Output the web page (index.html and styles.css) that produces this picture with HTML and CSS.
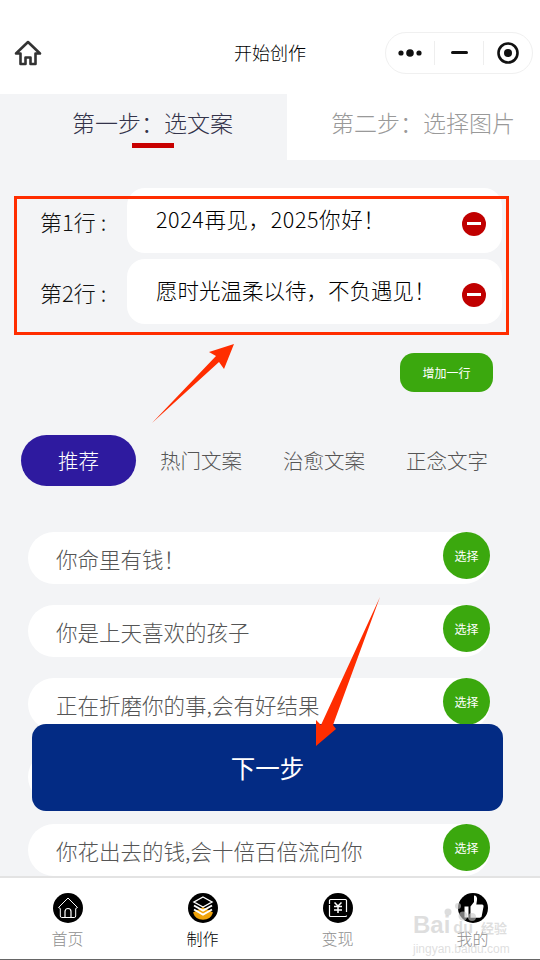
FILE: index.html
```html
<!DOCTYPE html>
<html lang="zh-CN">
<head>
    <meta charset="UTF-8">
    <meta name="viewport" content="width=device-width, initial-scale=1.0">
    <title>开始创作</title>
    <link rel="stylesheet" href="styles.css">
</head>
<body>
    <div class="page">
        <!-- Top Bar -->
        <header class="topbar">
            <svg class="home-icon" width="28" height="26" viewBox="0 0 28 26">
                <path d="M2 13.500 14 2l12 11.500h-4.500V24H16.500v-6.500h-5V24H6.500V13.500z" fill="none" stroke="#333" stroke-width="2.600" stroke-linejoin="round"/>
            </svg>
            <div class="topbar-title">开始创作</div>
            <div class="capsule">
                <div class="capsule-cell">
                    <svg width="24" height="10" viewBox="0 0 24 10"><circle cx="3" cy="5" r="2.600"/><circle cx="12" cy="5" r="3.800"/><circle cx="21" cy="5" r="2.600"/></svg>
                </div>
                <div class="capsule-cell">
                    <span class="capsule-dash"></span>
                </div>
                <div class="capsule-cell">
                    <svg width="22" height="22" viewBox="0 0 22 22"><circle cx="11" cy="11" r="9.500" fill="none" stroke="#111" stroke-width="2.600"/><circle cx="11" cy="11" r="4"/></svg>
                </div>
            </div>
        </header>

        <!-- Step Tabs -->
        <div class="steps">
            <div class="step step-active">
                <span>第一步：选文案</span>
                <i class="step-line"></i>
            </div>
            <div class="step">
                <span>第二步：选择图片</span>
            </div>
        </div>

        <main class="content">
            <!-- Input Rows -->
            <section class="lines">
                <div class="line">
                    <div class="line-label">第1行 :</div>
                    <div class="line-card line-card-first">
                        <span>2024再见，2025你好！</span>
                        <b class="minus"></b>
                    </div>
                </div>
                <div class="line">
                    <div class="line-label">第2行 :</div>
                    <div class="line-card">
                        <span>愿时光温柔以待，不负遇见！</span>
                        <b class="minus"></b>
                    </div>
                </div>
            </section>

            <div class="add-wrap">
                <div class="add-btn">增加一行</div>
            </div>

            <!-- Categories -->
            <nav class="cats">
                <div class="cat cat-active">推荐</div>
                <div class="cat">热门文案</div>
                <div class="cat">治愈文案</div>
                <div class="cat">正念文字</div>
            </nav>

            <!-- Copy List -->
            <ul class="copy-list">
                <li class="copy"><span>你命里有钱！</span><b class="pick">选择</b></li>
                <li class="copy"><span>你是上天喜欢的孩子</span><b class="pick">选择</b></li>
                <li class="copy"><span>正在折磨你的事,会有好结果</span><b class="pick">选择</b></li>
                <li class="copy"><span>努力的人,运气都不会差</span><b class="pick">选择</b></li>
                <li class="copy"><span>你花出去的钱,会十倍百倍流向你</span><b class="pick">选择</b></li>
            </ul>
        </main>

        <!-- Bottom Tabs -->
        <footer class="tabbar">
            <div class="tab">
                <svg width="30" height="30" viewBox="0 0 30 30">
                    <circle cx="15" cy="15" r="15" fill="#000"/>
                    <path d="M5.500 14.500 15 5l9.500 9.500-1.800 1v7.500a1.500 1.500 0 0 1-1.500 1.500H8.800a1.500 1.500 0 0 1-1.500-1.500v-7.500z" fill="none" stroke="#fff" stroke-width="1"/>
                    <path d="M12 24.500v-6a3 3 0 0 1 6 0v6" fill="none" stroke="#fff" stroke-width="1.200"/>
                </svg>
                <span>首页</span>
            </div>
            <div class="tab tab-active">
                <svg width="30" height="30" viewBox="0 0 30 30">
                    <circle cx="15" cy="15" r="15" fill="#000"/>
                    <path d="M5 19.500 15 14l10 5.500a10.500 10.500 0 0 1-20 0z" fill="#f0a30a"/>
                    <path d="M15 4 24 9l-9 5-9-5z" fill="none" stroke="#fff" stroke-width="1.400"/>
                    <path d="M6 12.500 15 17.500l9-5M6 16.500l9 5 9-5" fill="none" stroke="#fff" stroke-width="2"/>
                </svg>
                <span>制作</span>
            </div>
            <div class="tab">
                <svg width="30" height="30" viewBox="0 0 30 30">
                    <circle cx="15" cy="15" r="15" fill="#000"/>
                    <path d="M6.500 11V7.500a1 1 0 0 1 1-1h15a1 1 0 0 1 1 1V19M23.500 22.500a1 1 0 0 1-1 1h-15a1 1 0 0 1-1-1V12" fill="none" stroke="#fff" stroke-width="1.200"/>
                    <path d="M11.500 9.500 15 13l3.500-3.500M11 13.500h8M11 17h8M15 13v7" fill="none" stroke="#fff" stroke-width="1.500"/>
                </svg>
                <span>变现</span>
            </div>
            <div class="tab">
                <svg width="30" height="30" viewBox="0 0 30 30">
                    <circle cx="15" cy="15" r="15" fill="#000"/>
                    <path d="M12.500 13.500 16 9V2.500c2.300 0 3.500 1.800 3 4.500l-.7 4.500H24c1.300 0 1.800 1.200 1.500 2.300l-1.800 9.500c-.3 1-1 1.400-2 1.400h-9.200z" fill="#fff"/>
                    <rect x="6.500" y="13.500" width="4" height="11" fill="#fff"/>
                </svg>
                <span>我的</span>
            </div>
        </footer>

        <!-- Floating Next Button -->
        <div class="next-btn">下一步</div>

        <!-- Annotations drawn over the screenshot -->
        <div class="mark-box"></div>
        <svg class="marks" width="540" height="960" viewBox="0 0 540 960">
            <path d="M152 423 216 356 209 352 234 344 224 369 219 362z" fill="#ff2d00"/>
            <path d="M380 597 333 725 336 729 316 746 316 720 321 725z" fill="#ff2d00"/>
            <g fill="#c8c8c8" opacity="0.6">
                <circle cx="448" cy="912" r="3.500"/>
                <circle cx="458" cy="906" r="3"/>
                <circle cx="463" cy="916" r="4.500"/>
                <circle cx="472" cy="917" r="4"/>
            </g>
        </svg>

        <div class="watermark">
            <div class="wm-logo">Bai<em>du</em><span>经验</span></div>
            <div class="wm-url">jingyan.baidu.com</div>
        </div>
    </div>
</body>
</html>
```

FILE: styles.css
```css
* {
    margin: 0;
    padding: 0;
    box-sizing: border-box;
}

body {
    font-family: "Noto Sans CJK SC", "Liberation Sans", sans-serif;
    font-weight: 300;
    background-color: #f3f4f6;
    color: #111;
    overflow: hidden;
}

.page {
    position: relative;
    display: flex;
    flex-direction: column;
    width: 540px;
    height: 960px;
    overflow: hidden;
}

/* Top Bar */
.topbar {
    position: relative;
    display: flex;
    align-items: center;
    justify-content: space-between;
    flex: none;
    height: 94px;
    padding: 11px 7px 0 14px;
    background-color: #fff;
}

.topbar-title {
    position: absolute;
    left: 0;
    right: 0;
    top: 40px;
    text-align: center;
    font-size: 18px;
    line-height: 24px;
    color: #000;
    pointer-events: none;
}

.capsule {
    display: flex;
    align-items: center;
    width: 148px;
    height: 42px;
    border: 1px solid #f0f0f0;
    border-radius: 21px;
}

.capsule-cell {
    display: flex;
    align-items: center;
    justify-content: center;
    flex: 1;
    height: 24px;
    border-left: 1px solid #eee;
}

.capsule-cell:first-child {
    border-left: 0;
}

.capsule-cell svg {
    fill: #111;
}

.capsule-dash {
    width: 17px;
    height: 3px;
    background-color: #111;
    border-radius: 2px;
}

/* Step Tabs */
.steps {
    display: flex;
    flex: none;
    height: 66px;
}

.step {
    position: relative;
    flex: 1;
    background-color: #fff;
    color: #999;
    font-size: 23px;
    line-height: 56px;
    white-space: nowrap;
    padding-left: 44px;
}

.step-active {
    flex: none;
    width: 287px;
    padding-left: 72px;
    background-color: #f3f4f6;
    color: #33334a;
}

.step-line {
    position: absolute;
    left: 132px;
    top: 49px;
    width: 42px;
    height: 5px;
    background-color: #c80000;
}

/* Input Rows */
.content {
    flex: 1;
    overflow: hidden;
}

.lines {
    display: flex;
    flex-direction: column;
    gap: 6px;
    padding: 28px 38px 0 40px;
}

.line {
    display: flex;
    align-items: center;
    justify-content: space-between;
}

.line-label {
    font-size: 22px;
    line-height: 30px;
    color: #111;
}

.line-card {
    display: flex;
    align-items: center;
    justify-content: space-between;
    width: 375px;
    height: 65px;
    padding: 0 16px 0 29px;
    background-color: #fff;
    border-radius: 18px;
    font-size: 21.500px;
    color: #000;
}

.line-card-first {
    letter-spacing: 0.600px;
}

.line-card span {
    position: relative;
    top: -2px;
}

.minus {
    position: relative;
    top: 3px;
    width: 24px;
    height: 24px;
    background-color: #c00000;
    border-radius: 50%;
}

.minus::after {
    content: "";
    position: absolute;
    left: 5px;
    right: 5px;
    top: 10.500px;
    height: 3px;
    background-color: #fff;
}

.add-wrap {
    display: flex;
    justify-content: flex-end;
    padding: 29px 47px 0 0;
}

.add-btn {
    width: 93px;
    height: 39px;
    background-color: #3ba80e;
    border-radius: 14px;
    color: #fff;
    font-size: 12px;
    font-weight: 400;
    line-height: 39px;
    text-align: center;
}

/* Categories */
.cats {
    display: flex;
    align-items: center;
    gap: 41px;
    padding: 43px 0 0 21px;
}

.cat {
    font-size: 20.500px;
    line-height: 49px;
    color: #555;
    white-space: nowrap;
}

.cat-active {
    width: 115px;
    height: 51px;
    margin-right: -17px;
    background-color: #2e1a9f;
    border-radius: 26px;
    color: #fff;
    line-height: 51px;
    text-align: center;
}

/* Copy List */
.copy-list {
    display: flex;
    flex-direction: column;
    gap: 21px;
    padding: 46px 50px 0 28px;
    list-style: none;
}

.copy {
    display: flex;
    align-items: center;
    justify-content: space-between;
    height: 52px;
    padding-left: 28px;
    background-color: #fff;
    border-radius: 26px;
    font-size: 21.500px;
    color: #555;
}

.pick {
    flex: none;
    align-self: flex-start;
    width: 47px;
    height: 47px;
    background-color: #3ba80e;
    border-radius: 50%;
    color: #fff;
    font-size: 12px;
    font-weight: 400;
    line-height: 47px;
    text-align: center;
}

/* Bottom Tabs */
.tabbar {
    display: flex;
    flex: none;
    height: 84px;
    padding: 15px 0 0 0;
    background-color: #fff;
    border-top: 2px solid #e3e3e3;
    border-bottom: 1px solid #666;
}

.tab {
    display: flex;
    flex-direction: column;
    align-items: center;
    flex: 1;
    font-size: 16px;
    line-height: 24px;
    color: #8f8f8f;
}

.tab span {
    margin-top: 3px;
}

.tab-active {
    color: #000;
}

/* Floating Next Button */
.next-btn {
    position: absolute;
    left: 32px;
    top: 724px;
    width: 471px;
    height: 87px;
    background-color: #032b84;
    border-radius: 14px;
    color: #fff;
    font-size: 24.500px;
    font-weight: 400;
    line-height: 87px;
    text-align: center;
}

/* Annotations */
.mark-box {
    position: absolute;
    left: 14px;
    top: 196px;
    width: 495px;
    height: 139px;
    border: 3px solid #ff2d00;
}

.marks {
    position: absolute;
    left: 0;
    top: 0;
    pointer-events: none;
}

.watermark {
    position: absolute;
    left: 413px;
    top: 911px;
    width: 100px;
    color: rgba(190, 190, 190, 0.5);
    white-space: nowrap;
}

.wm-logo {
    font-family: "Liberation Sans", "Noto Sans CJK SC", sans-serif;
    font-size: 24px;
    font-weight: 700;
    line-height: 27px;
}

.wm-logo em {
    margin: 0 8px 0 3px;
    font-size: 16px;
    font-style: normal;
}

.wm-logo span {
    font-size: 13px;
}

.wm-url {
    font-family: "Liberation Sans", sans-serif;
    font-size: 12px;
    line-height: 14px;
}
```
